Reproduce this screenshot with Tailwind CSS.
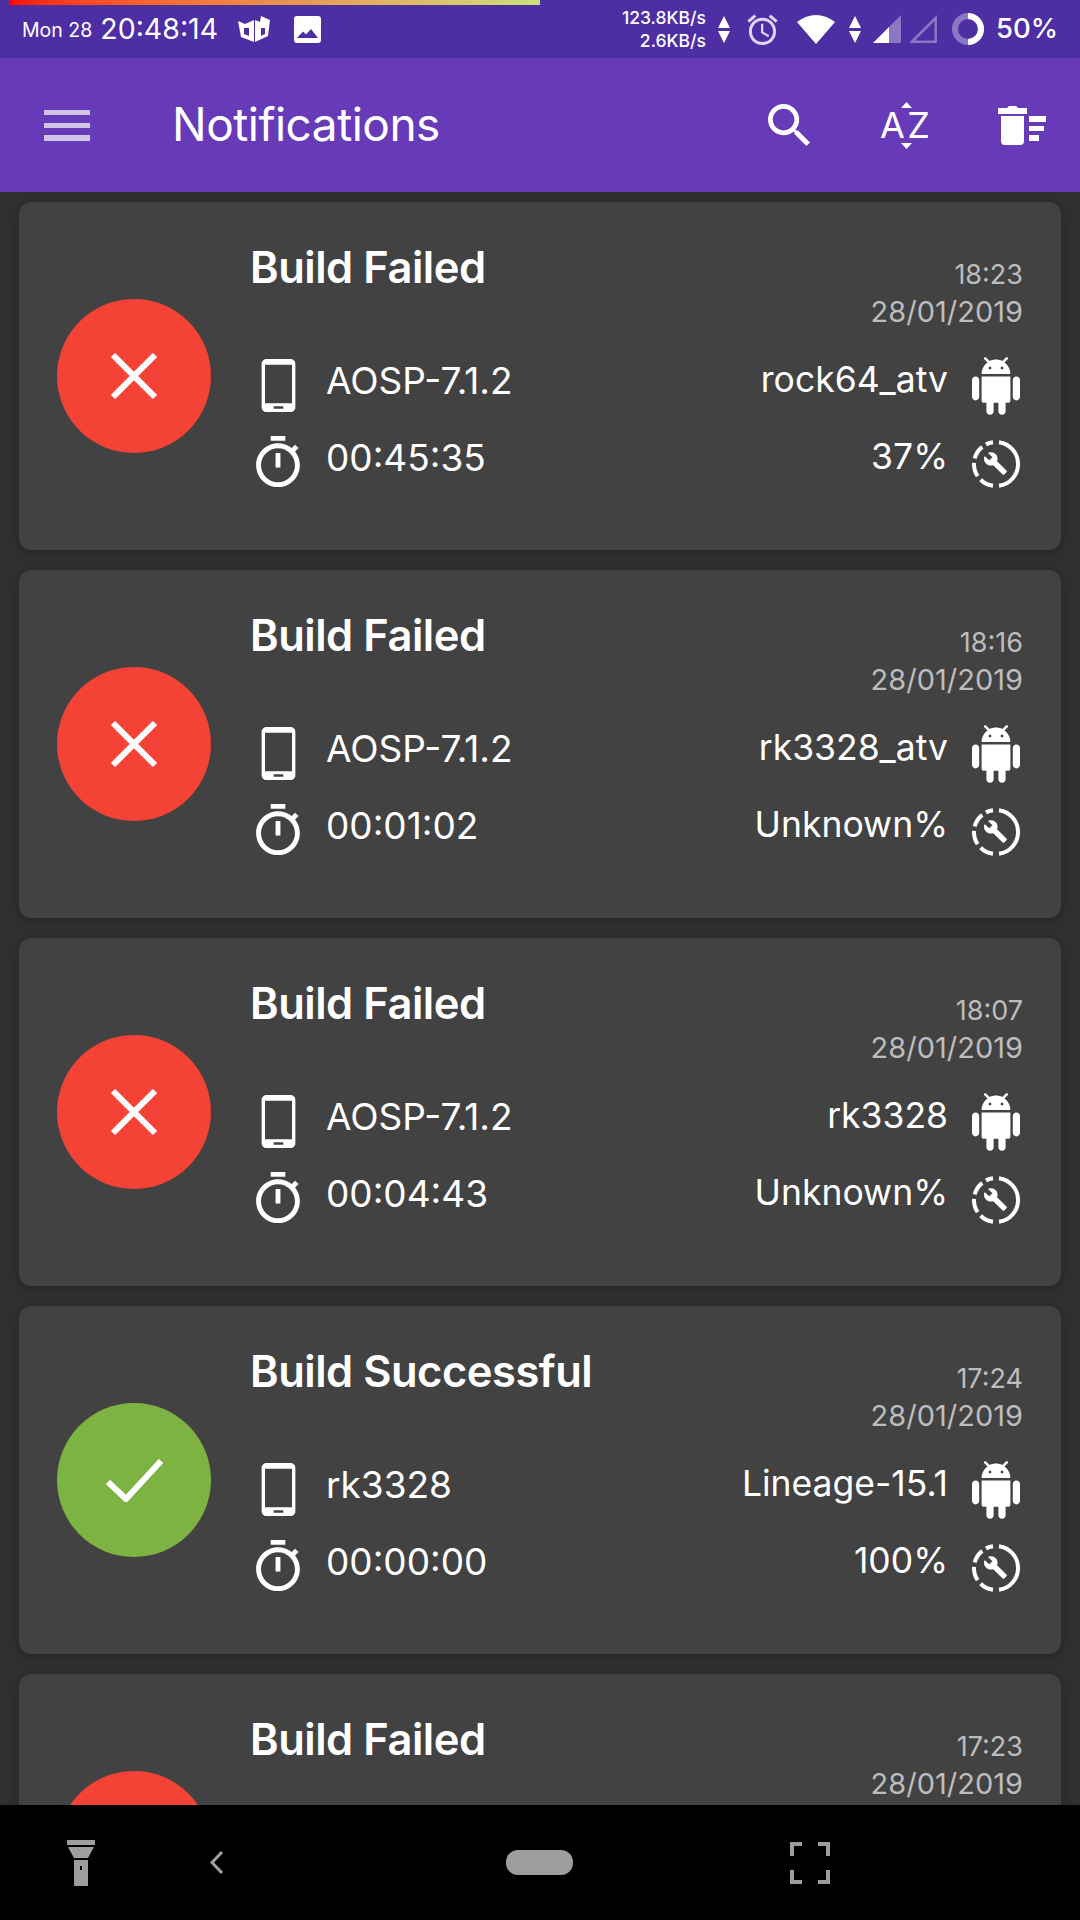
<!DOCTYPE html>
<html lang="en">
  <head>
    <meta charset="UTF-8" />
    <meta name="viewport" content="width=device-width, initial-scale=1.0" />
    <title>Notifications</title>
    <script src="https://cdn.jsdelivr.net/npm/@tailwindcss/browser@4"></script>
  </head>

  <body class="w-[1080px] h-[1920px] overflow-hidden bg-[#303030] text-white font-['Inter',sans-serif]">
    <svg class="hidden">
      <defs>
        <symbol id="phone" viewBox="5 1 14 22"><path fill="currentColor" fill-rule="evenodd" d="M17 1.010L7 1c-1.100 0-2 .9-2 2v18c0 1.100.9 2 2 2h10c1.100 0 2-.9 2-2V3c0-1.100-.9-1.990-2-1.990zM17.600 19.400H6.400V3.400h11.200zM10 20.600h4v1h-4z"/></symbol>
        <symbol id="timer" viewBox="3 1 18 21"><path fill="currentColor" d="M15 1H9v2h6V1zm-4 13h2V8h-2v6zm8.030-6.610l1.420-1.420c-.43-.51-.9-.99-1.410-1.410l-1.420 1.420C16.070 4.740 14.120 4 12 4c-4.970 0-9 4.030-9 9s4.020 9 9 9 9-4.030 9-9c0-2.120-.74-4.070-1.970-5.610zM12 20c-3.870 0-7-3.130-7-7s3.130-7 7-7 7 3.130 7 7-3.130 7-7 7z"/></symbol>
        <symbol id="android" viewBox="2 0 20 24"><path fill="currentColor" d="M6 18c0 .55.45 1 1 1h1v3.500c0 .83.67 1.500 1.500 1.500s1.500-.67 1.500-1.500V19h2v3.500c0 .83.67 1.500 1.500 1.500s1.500-.67 1.500-1.500V19h1c.55 0 1-.45 1-1V8H6v10zM3.500 8C2.670 8 2 8.670 2 9.500v7c0 .83.67 1.500 1.500 1.500S5 17.330 5 16.500v-7C5 8.670 4.330 8 3.500 8zm17 0c-.83 0-1.500.67-1.500 1.500v7c0 .83.67 1.500 1.500 1.500s1.500-.67 1.500-1.500v-7c0-.83-.67-1.500-1.500-1.500zm-4.970-5.840l1.300-1.300c.2-.2.2-.51 0-.71-.2-.2-.51-.2-.71 0l-1.480 1.480C13.850 1.230 12.950 1 12 1c-.96 0-1.860.23-2.660.63L7.850.15c-.2-.2-.51-.2-.71 0-.2.2-.2.51 0 .71l1.310 1.310C6.970 3.260 6 5.010 6 7h12c0-1.990-.97-3.750-2.470-4.840zM10 5H9V4h1v1zm5 0h-1V4h1v1z"/></symbol>
        <symbol id="progress" viewBox="0 0 48 48">
          <path fill="none" stroke="currentColor" stroke-width="4" d="M27 2.200A22 22 0 0 1 27 45.800"/>
          <path fill="none" stroke="currentColor" stroke-width="4" stroke-dasharray="14 4.500" d="M21 45.800A22 22 0 0 1 21 2.200"/>
          <path fill="currentColor" transform="translate(11 11) scale(1.040)" d="M22.700 19l-9.100-9.100c.9-2.300.4-5-1.500-6.900-2-2-5-2.400-7.400-1.300L9 6 6 9 1.600 4.700C.4 7.100.9 10.100 2.900 12.100c1.900 1.900 4.600 2.400 6.900 1.500l9.100 9.100c.4.4 1 .4 1.400 0l2.300-2.300c.5-.4.5-1.100.1-1.400z"/>
        </symbol>
        <symbol id="updown" viewBox="0 0 12 27"><path fill="currentColor" d="M6 0l6 12H0zM0 15h12L6 27z"/></symbol>
      </defs>
    </svg>

    <!-- Status bar -->
    <div class="relative h-[58px] bg-[#4e2ea3] flex items-center pl-[22px] pr-[22px]">
      <div class="absolute left-[9px] top-0 w-[531px] h-[5px] bg-linear-to-r from-[#ff0000] via-[#e8914a] to-[#c9e27c]"></div>
      <span class="text-[19.500px] leading-none mt-[4px]">Mon 28</span>
      <span class="text-[28.500px] leading-none ml-[8px] mt-[1px]">20:48:14</span>
      <svg class="ml-[20px]" width="32" height="26" viewBox="0 0 32 26"><path fill="#fff" fill-rule="evenodd" d="M0 5l7 3 9-4v22L3 21zM6 12v6l5 2v-8zM17 26V4l5 2 1-6 9 4-2 16zM23 12v8l4-2v-6z"/></svg>
      <svg class="ml-[24px]" width="27" height="27" viewBox="0 0 27 27"><path fill="#fff" fill-rule="evenodd" d="M3 0h21a3 3 0 0 1 3 3v21a3 3 0 0 1-3 3H3a3 3 0 0 1-3-3V3a3 3 0 0 1 3-3zM3 22h21l-7-9-5 5.500-3-3z"/></svg>
      <div class="flex-1"></div>
      <div class="flex flex-col items-end text-[17.500px] leading-[23px] font-medium mt-[-1px]">
        <span>123.8KB/s</span>
        <span>2.6KB/s</span>
      </div>
      <svg class="ml-[12px] text-white" width="12" height="27"><use href="#updown"/></svg>
      <svg class="ml-[17px] text-[#ddd6ee]" width="31" height="31" viewBox="2 1.500 20 20.500"><path fill="currentColor" d="M22 5.720l-4.600-3.860-1.290 1.530 4.600 3.860L22 5.720zM7.880 3.390L6.600 1.860 2 5.710l1.290 1.530 4.590-3.850zM12.500 8H11v6l4.750 2.850.75-1.230-4-2.370V8zM12 4c-4.970 0-9 4.030-9 9s4.030 9 9 9 9-4.030 9-9-4.030-9-9-9zm0 16c-3.870 0-7-3.130-7-7s3.130-7 7-7 7 3.130 7 7-3.130 7-7 7z"/></svg>
      <svg class="ml-[19px]" width="38" height="29" viewBox="0 0 38 29"><path fill="#fff" d="M0 7Q19-7 38 7L19 29z"/></svg>
      <svg class="ml-[14px] text-white" width="12" height="27"><use href="#updown"/></svg>
      <svg class="ml-[12px]" width="28" height="28" viewBox="0 0 28 28"><path fill="#fff" fill-opacity=".35" d="M16 12L28 0v28H16z"/><path fill="#fff" d="M0 28l16-16v16z"/></svg>
      <svg class="ml-[8px]" width="28" height="28" viewBox="0 0 28 28"><path fill="none" stroke="#fff" stroke-opacity=".35" stroke-width="2.500" d="M3 26.700L26.700 3v23.700z"/></svg>
      <svg class="ml-[15px]" width="32" height="32" viewBox="0 0 32 32"><circle cx="16" cy="16" r="13" fill="none" stroke="#fff" stroke-opacity=".35" stroke-width="6"/><path fill="none" stroke="#fff" stroke-width="6" d="M16 3a13 13 0 0 1 0 26"/></svg>
      <span class="text-[27.500px] leading-none font-medium ml-[12px]">50%</span>
    </div>

    <!-- App bar -->
    <header class="h-[134px] bg-[#673ab7] flex items-center">
      <svg class="ml-[44px]" width="46" height="31" viewBox="0 0 46 31"><path fill="#d1c4e9" d="M0 0h46v5H0zM0 13h46v5H0zM0 25h46v6H0z"/></svg>
      <h1 class="ml-[82px] text-[46px] leading-none tracking-[-0.5px] mt-[-2px]">Notifications</h1>
      <div class="flex-1"></div>
      <svg width="42" height="42" viewBox="3 3 17.500 17.500"><path fill="#fff" d="M15.500 14h-.79l-.28-.27C15.410 12.590 16 11.110 16 9.500 16 5.910 13.090 3 9.500 3S3 5.910 3 9.500 5.910 16 9.500 16c1.610 0 3.090-.59 4.230-1.570l.27.28v.79l5 4.990L20.490 19l-4.990-5zm-6 0C7.010 14 5 11.990 5 9.500S7.010 5 9.500 5 14 7.010 14 9.500 11.990 14 9.500 14z"/></svg>
      <div class="relative ml-[70px] w-[50px] h-[47px] flex items-center justify-between">
        <span class="text-[36px] leading-none">A</span>
        <span class="text-[36px] leading-none">Z</span>
        <svg class="absolute left-[21px] top-0" width="11" height="6"><path fill="#fff" d="M5.500 0L11 6H0z"/></svg>
        <svg class="absolute left-[21px] bottom-0" width="11" height="6"><path fill="#fff" d="M0 0h11L5.500 6z"/></svg>
      </div>
      <svg class="ml-[68px] mr-[34px]" width="48" height="39" viewBox="0 0 48 39"><path fill="#fff" d="M0 2h9l2-2h7l2 2h9v6H0zM3 10h23v25a4 4 0 0 1-4 4H7a4 4 0 0 1-4-4zM31 10h17v6H31zM31 20h15v5H31zM31 29h10v6H31z"/></svg>
    </header>

    <!-- Notification list -->
    <main id="list" class="h-[1613px] overflow-hidden flex flex-col gap-[20px] pt-[10px] px-[19px]"></main>

    <!-- Navigation bar -->
    <nav class="h-[115px] bg-black flex items-center">
      <svg class="ml-[67px]" width="28" height="46" viewBox="0 0 28 46"><path fill="#9e9e9e" fill-rule="evenodd" d="M0 0h28v5H0zM1 7h26l-6 11H7zM7 20h14v26H7zM13 26v4h2v-4z"/></svg>
      <svg class="ml-[114px]" width="14" height="23" viewBox="0 0 14 23"><path fill="none" stroke="#9e9e9e" stroke-width="3" d="M13 1L3 11.500 13 22"/></svg>
      <div class="ml-[283px] w-[67px] h-[25px] rounded-[12px] bg-[#9e9e9e]"></div>
      <svg class="ml-[217px]" width="40" height="42" viewBox="0 0 40 42"><path fill="none" stroke="#9e9e9e" stroke-width="4" d="M2 14V2h10M28 2h10v12M2 28v12h10M28 40h10V28"/></svg>
    </nav>

    <script>
      // Build list data, the last card is cut off by the nav bar before its rows start
      const builds = [
        { ok: false, time: "18:23", rom: "AOSP-7.1.2", device: "rock64_atv", took: "00:45:35", pct: "37%" },
        { ok: false, time: "18:16", rom: "AOSP-7.1.2", device: "rk3328_atv", took: "00:01:02", pct: "Unknown%" },
        { ok: false, time: "18:07", rom: "AOSP-7.1.2", device: "rk3328", took: "00:04:43", pct: "Unknown%" },
        { ok: true, time: "17:24", rom: "rk3328", device: "Lineage-15.1", took: "00:00:00", pct: "100%" },
        { ok: false, time: "17:23" },
      ];

      const failedIcon = `<div class="ml-[38px] size-[154px] rounded-full bg-[#f44336] flex items-center justify-center">
          <svg width="46" height="46" viewBox="0 0 46 46"><path stroke="#fff" stroke-width="6" d="M2 2l42 42M44 2L2 44"/></svg>
        </div>`;
      const okIcon = `<div class="ml-[38px] size-[154px] rounded-full bg-[#7cb342] flex items-center justify-center">
          <svg width="57" height="43" viewBox="0 0 57 43"><path fill="none" stroke="#fff" stroke-width="6" d="M2 23l18 17L55 2"/></svg>
        </div>`;

      function rows(b) {
        if (!b.rom) return "";
        return `<div class="flex items-center h-[56px] mt-[26px]">
            <svg class="ml-[10px] w-[35px] h-[53px] mt-[2px]"><use href="#phone"/></svg>
            <span class="ml-[30px] mb-[8px] text-[37px] leading-none">${b.rom}</span>
            <span class="ml-auto mr-[24px] mb-[8px] text-[35.500px] leading-none">${b.device}</span>
            <svg class="mr-[3px] mt-[4px] w-[48px] h-[58px]"><use href="#android"/></svg>
          </div>
          <div class="flex items-center h-[56px] mt-[21px]">
            <svg class="ml-[5px] w-[44px] h-[51px]"><use href="#timer"/></svg>
            <span class="ml-[26px] mb-[8px] text-[37px] leading-none">${b.took}</span>
            <span class="ml-auto mr-[24px] mb-[8px] text-[35.500px] leading-none">${b.pct}</span>
            <svg class="mr-[3px] mt-[6px] w-[48px] h-[48px]"><use href="#progress"/></svg>
          </div>`;
      }

      document.getElementById("list").innerHTML = builds
        .map(
          (b) => `<article class="shrink-0 h-[348px] rounded-[12px] bg-[#424242] shadow-[0_2px_12px_rgba(0,0,0,0.25)] flex items-center">
        ${b.ok ? okIcon : failedIcon}
        <div class="ml-[40px] w-[772px] self-start">
          <div class="flex justify-between">
            <h2 class="ml-[-1px] text-[43.500px] leading-[50px] font-semibold tracking-[-0.5px] mt-[40px]">${b.ok ? "Build Successful" : "Build Failed"}</h2>
            <p class="flex flex-col items-end leading-[37px] text-[#bdbdbd] mt-[54px]">
              <span class="text-[27px]">${b.time}</span>
              <span class="text-[29px]">28/01/2019</span>
            </p>
          </div>
          ${rows(b)}
        </div>
      </article>`
        )
        .join("");
    </script>
  </body>
</html>
